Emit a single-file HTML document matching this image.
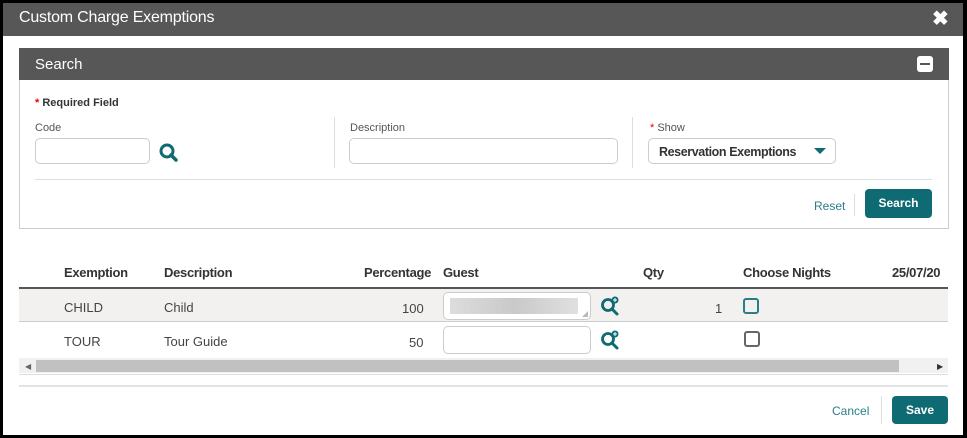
<!DOCTYPE html>
<html><head><style>
*{margin:0;padding:0;box-sizing:border-box}
body{width:967px;height:438px;background:#000;position:relative;overflow:hidden;font-family:"Liberation Sans",sans-serif;color:#333}
.a{position:absolute}
.dlg{left:3px;top:3px;width:960px;height:432px;background:#fff}
.t{font-size:13px;color:#444}
.inp{position:absolute;background:#fff;border:1px solid #ccc;border-radius:5px}
.h{font-size:13px;font-weight:bold;color:#333;letter-spacing:-0.3px}
</style></head><body>
<div class="a dlg"></div>
<div class="a" style="left:3px;top:3px;width:960px;height:33px;background:#575757"></div>
<div class="a" style="left:19px;top:9px;color:#fff;font-size:16px;letter-spacing:-0.2px">Custom Charge Exemptions</div>
<div class="a" style="left:932px;top:6px;color:#fff;font-size:20px;font-weight:bold">✖</div>

<div class="a" style="left:19px;top:48px;width:930px;height:181px;border:1px solid #ccc"></div>
<div class="a" style="left:19px;top:48px;width:930px;height:32px;background:#575757"></div>
<div class="a" style="left:35px;top:56px;color:#fff;font-size:15px">Search</div>
<div class="a" style="left:917px;top:56px;width:16px;height:16px;background:#fff;border-radius:3px"><div class="a" style="left:3px;top:7px;width:10px;height:2px;background:#575757"></div></div>

<div class="a" style="left:35px;top:97px;font-size:11px;font-weight:bold"><span style="color:#e00">*</span> Required Field</div>
<div class="a" style="left:35px;top:122px;font-size:11px;color:#555">Code</div>
<div class="inp" style="left:35px;top:138px;width:115px;height:26px"></div>
<svg class="a" style="left:158px;top:142px" width="22" height="22" viewBox="0 0 22 22"><circle cx="9" cy="9" r="6" fill="none" stroke="#0f6b73" stroke-width="3"/><path d="M13 13l5 5" stroke="#0f6b73" stroke-width="3.5" stroke-linecap="round"/></svg>
<div class="a" style="left:334px;top:117px;width:1px;height:51px;background:#ddd"></div>
<div class="a" style="left:350px;top:122px;font-size:11px;color:#555">Description</div>
<div class="inp" style="left:349px;top:138px;width:269px;height:26px"></div>
<div class="a" style="left:632px;top:117px;width:1px;height:51px;background:#ddd"></div>
<div class="a" style="left:650px;top:122px;font-size:11px;color:#555"><span style="color:#e00">*</span> Show</div>
<div class="inp" style="left:648px;top:138px;width:188px;height:26px"></div>
<div class="a" style="left:659px;top:145px;font-size:12.5px;font-weight:bold;color:#333;letter-spacing:-0.4px">Reservation Exemptions</div>
<div class="a" style="left:814px;top:148px;width:0;height:0;border-left:6px solid transparent;border-right:6px solid transparent;border-top:6px solid #0f6b73"></div>
<div class="a" style="left:35px;top:179px;width:897px;height:1px;background:#ddd"></div>
<div class="a" style="left:814px;top:199px;font-size:12px;color:#2a7f87">Reset</div>
<div class="a" style="left:854px;top:194px;width:1px;height:22px;background:#ddd"></div>
<div class="a" style="left:865px;top:189px;width:67px;height:29px;background:#0f6b73;border-radius:4px;color:#fff;font-size:12px;font-weight:bold;text-align:center;line-height:29px">Search</div>

<div class="a h" style="left:64px;top:265px">Exemption</div>
<div class="a h" style="left:164px;top:265px">Description</div>
<div class="a h" style="left:364px;top:265px">Percentage</div>
<div class="a h" style="left:443px;top:265px">Guest</div>
<div class="a h" style="left:643px;top:265px">Qty</div>
<div class="a h" style="left:743px;top:265px">Choose Nights</div>
<div class="a h" style="left:892px;top:265px">25/07/20</div>
<div class="a" style="left:19px;top:287px;width:929px;height:2px;background:#555"></div>
<div class="a" style="left:19px;top:289px;width:929px;height:33px;background:#f2f1ef;border-bottom:1px solid #ccc"></div>
<div class="a t" style="left:64px;top:300px">CHILD</div>
<div class="a t" style="left:164px;top:300px">Child</div>
<div class="a t" style="left:402px;top:301px">100</div>
<div class="inp" style="left:443px;top:292px;width:148px;height:28px"><div class="a" style="left:6px;top:5px;width:128px;height:16px;background:linear-gradient(90deg,#ddd,#c9c9c9,#e0e0e0)"></div><div class="a" style="right:2px;bottom:2px;width:0;height:0;border-left:6px solid transparent;border-bottom:6px solid #bbb"></div></div>
<div class="a t" style="left:715px;top:301px">1</div>
<div class="a" style="left:743px;top:298px;width:16px;height:16px;border:2px solid #2a7f87;border-radius:3px"></div>
<div class="a t" style="left:64px;top:334px">TOUR</div>
<div class="a t" style="left:164px;top:334px">Tour Guide</div>
<div class="a t" style="left:409px;top:335px">50</div>
<div class="inp" style="left:443px;top:326px;width:148px;height:28px"></div>
<div class="a" style="left:744px;top:331px;width:16px;height:16px;border:2px solid #666;border-radius:3px"></div>
<svg class="a" style="left:600px;top:295px" width="22" height="22" viewBox="0 0 22 22"><circle cx="8" cy="10" r="5.5" fill="none" stroke="#0f6b73" stroke-width="2.8"/><path d="M12 14l5 5" stroke="#0f6b73" stroke-width="3" stroke-linecap="round"/><circle cx="15" cy="5" r="3.5" fill="#0f6b73"/><path d="M15 3v4M13 5h4" stroke="#fff" stroke-width="1"/></svg>
<svg class="a" style="left:600px;top:329px" width="22" height="22" viewBox="0 0 22 22"><circle cx="8" cy="10" r="5.5" fill="none" stroke="#0f6b73" stroke-width="2.8"/><path d="M12 14l5 5" stroke="#0f6b73" stroke-width="3" stroke-linecap="round"/><circle cx="15" cy="5" r="3.5" fill="#0f6b73"/><path d="M15 3v4M13 5h4" stroke="#fff" stroke-width="1"/></svg>
<div class="a" style="left:19px;top:358px;width:929px;height:15px;background:#f1f1f1"></div>
<div class="a" style="left:36px;top:360px;width:863px;height:12px;background:#c1c1c1"></div>
<div class="a" style="left:25px;top:362px;font-size:8px;color:#666">◀</div>
<div class="a" style="left:937px;top:362px;font-size:8px;color:#333">▶</div>
<div class="a" style="left:19px;top:374px;width:929px;height:1px;background:#ddd"></div>
<div class="a" style="left:19px;top:385px;width:929px;height:2px;background:#e3e3e3"></div>
<div class="a" style="left:832px;top:404px;font-size:12px;color:#2a7f87">Cancel</div>
<div class="a" style="left:881px;top:396px;width:1px;height:28px;background:#ddd"></div>
<div class="a" style="left:892px;top:396px;width:56px;height:28px;background:#0f6b73;border-radius:4px;color:#fff;font-size:12px;font-weight:bold;text-align:center;line-height:28px">Save</div>
</body></html>
